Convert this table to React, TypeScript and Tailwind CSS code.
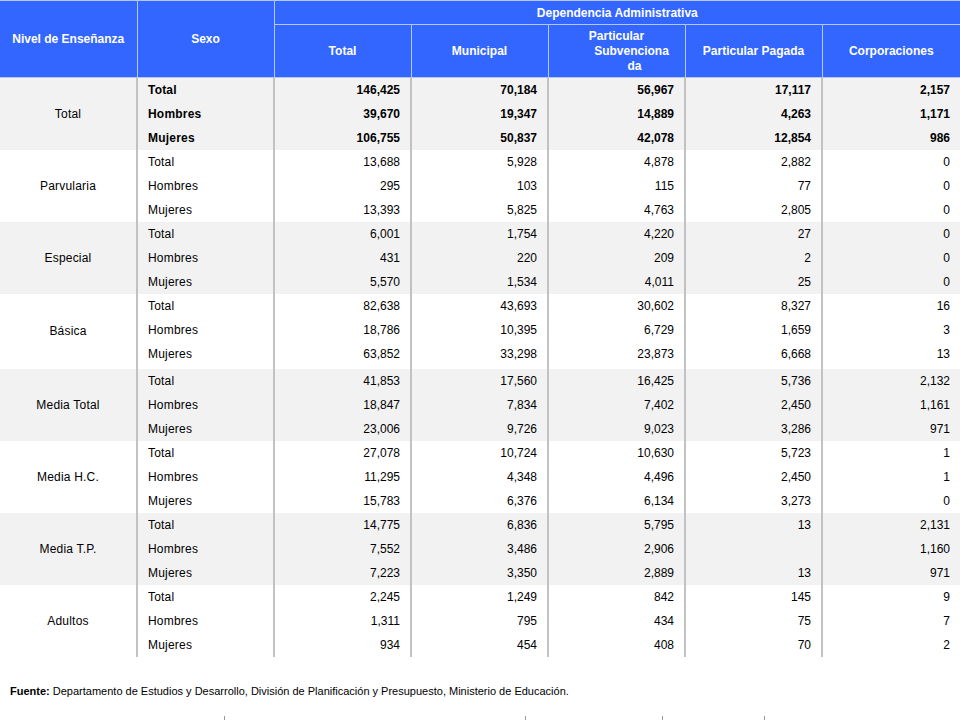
import React from 'react'

type Group = { name: string; bold?: boolean; tall?: boolean; rows: string[][] }

const groups: Group[] = [
  {
    name: 'Total',
    bold: true,
    rows: [
      ['Total', '146,425', '70,184', '56,967', '17,117', '2,157'],
      ['Hombres', '39,670', '19,347', '14,889', '4,263', '1,171'],
      ['Mujeres', '106,755', '50,837', '42,078', '12,854', '986'],
    ],
  },
  {
    name: 'Parvularia',
    rows: [
      ['Total', '13,688', '5,928', '4,878', '2,882', '0'],
      ['Hombres', '295', '103', '115', '77', '0'],
      ['Mujeres', '13,393', '5,825', '4,763', '2,805', '0'],
    ],
  },
  {
    name: 'Especial',
    rows: [
      ['Total', '6,001', '1,754', '4,220', '27', '0'],
      ['Hombres', '431', '220', '209', '2', '0'],
      ['Mujeres', '5,570', '1,534', '4,011', '25', '0'],
    ],
  },
  {
    name: 'Básica',
    tall: true,
    rows: [
      ['Total', '82,638', '43,693', '30,602', '8,327', '16'],
      ['Hombres', '18,786', '10,395', '6,729', '1,659', '3'],
      ['Mujeres', '63,852', '33,298', '23,873', '6,668', '13'],
    ],
  },
  {
    name: 'Media Total',
    rows: [
      ['Total', '41,853', '17,560', '16,425', '5,736', '2,132'],
      ['Hombres', '18,847', '7,834', '7,402', '2,450', '1,161'],
      ['Mujeres', '23,006', '9,726', '9,023', '3,286', '971'],
    ],
  },
  {
    name: 'Media H.C.',
    rows: [
      ['Total', '27,078', '10,724', '10,630', '5,723', '1'],
      ['Hombres', '11,295', '4,348', '4,496', '2,450', '1'],
      ['Mujeres', '15,783', '6,376', '6,134', '3,273', '0'],
    ],
  },
  {
    name: 'Media T.P.',
    rows: [
      ['Total', '14,775', '6,836', '5,795', '13', '2,131'],
      ['Hombres', '7,552', '3,486', '2,906', '', '1,160'],
      ['Mujeres', '7,223', '3,350', '2,889', '13', '971'],
    ],
  },
  {
    name: 'Adultos',
    rows: [
      ['Total', '2,245', '1,249', '842', '145', '9'],
      ['Hombres', '1,311', '795', '434', '75', '7'],
      ['Mujeres', '934', '454', '408', '70', '2'],
    ],
  },
]

const th = 'bg-[#3366ff] border border-[#b3c6ff] text-white font-bold text-[12px] text-center align-middle p-0'

export default function App() {
  return (
    <div className="w-[960px] h-[720px] bg-white overflow-hidden font-['Liberation_Sans',Arial,sans-serif] text-black">
      <table className="w-[960px] table-fixed border-collapse">
        <colgroup>
          <col className="w-[137px]" />
          <col className="w-[137px]" />
          <col className="w-[137px]" />
          <col className="w-[137px]" />
          <col className="w-[137px]" />
          <col className="w-[137px]" />
          <col className="w-[138px]" />
        </colgroup>
        <thead>
          <tr className="h-[24px]">
            <th rowSpan={2} className={`${th} border-l-0`}>Nivel de Enseñanza</th>
            <th rowSpan={2} className={th}>Sexo</th>
            <th colSpan={5} className={`${th} border-r-0`}>Dependencia Administrativa</th>
          </tr>
          <tr className="h-[53px]">
            <th className={th}>Total</th>
            <th className={th}>Municipal</th>
            <th className={`${th} leading-[15px]`}>
              <div>Particular</div>
              <div className="pl-[30px]">Subvenciona</div>
              <div className="pl-[36px]">da</div>
            </th>
            <th className={th}>Particular Pagada</th>
            <th className={`${th} border-r-0`}>Corporaciones</th>
          </tr>
        </thead>
        <tbody className="text-[12px]">
          {groups.map((g, gi) =>
            g.rows.map((r, ri) => (
              <tr key={`${gi}-${ri}`} className={gi % 2 === 0 ? 'bg-[#f2f2f2]' : 'bg-white'}>
                {ri === 0 && (
                  <td rowSpan={3} className="text-center align-middle p-0 tracking-[0.2px]">
                    {g.name}
                  </td>
                )}
                <td
                  className={`border-l-2 border-[#c2c2c2] pl-[10px] align-top tracking-[0.2px] ${g.bold ? 'font-bold' : ''} ${
                    g.tall && ri === 2 ? 'h-[27px]' : 'h-[24px]'
                  } pt-[3px]`}
                >
                  {r[0]}
                </td>
                {r.slice(1).map((v, ci) => (
                  <td
                    key={ci}
                    className={`border-l-2 border-[#c2c2c2] text-right pr-[10px] align-top pt-[3px] ${
                      g.bold ? 'font-bold' : ''
                    }`}
                  >
                    {v}
                  </td>
                ))}
              </tr>
            ))
          )}
        </tbody>
      </table>

      <p className="mt-[28px] pl-[10px] text-[11px] leading-[13px]">
        <span className="font-bold">Fuente:</span> Departamento de Estudios y Desarrollo, División de Planificación y
        Presupuesto, Ministerio de Educación.
      </p>

      <div className="mt-[18px] flex h-[4px]">
        <span className="ml-[224px] w-px h-[4px] bg-[#9a9a9a]" />
        <span className="ml-[300px] w-px h-[4px] bg-[#9a9a9a]" />
        <span className="ml-[136px] w-px h-[4px] bg-[#9a9a9a]" />
        <span className="ml-[101px] w-px h-[4px] bg-[#9a9a9a]" />
      </div>
    </div>
  )
}
